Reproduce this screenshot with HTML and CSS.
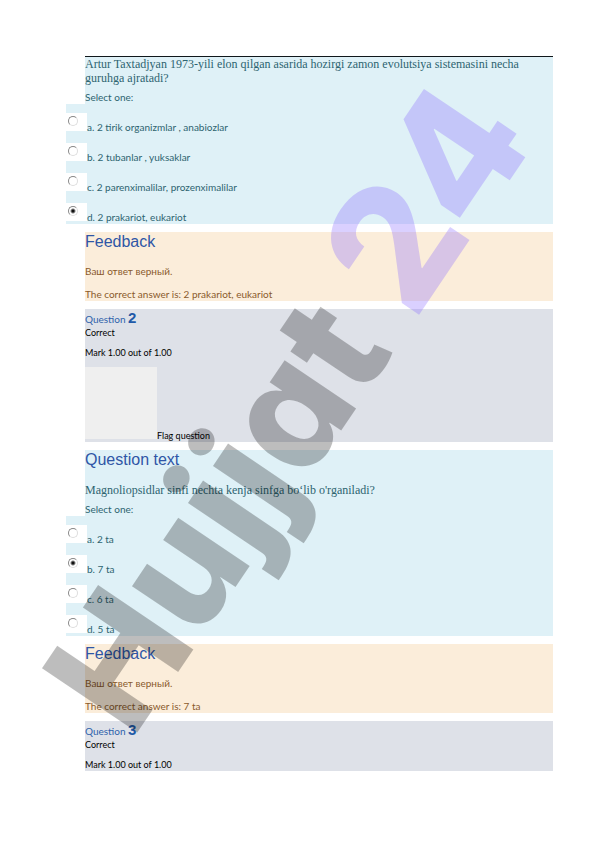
FILE: index.html
```html
<!DOCTYPE html>
<html lang="uz">
<head>
  <meta charset="utf-8">
  <meta name="viewport" content="width=device-width, initial-scale=1">
  <title>Quiz review</title>
  <link rel="stylesheet" href="styles.css">
</head>
<body>
<main class="review">

  <!-- question 1 -->
  <section class="question first">
    <p class="qtext">Artur Taxtadjyan 1973-yili elon qilgan asarida hozirgi zamon evolutsiya sistemasini necha guruhga ajratadi?</p>
    <p class="prompt">Select one:</p>
    <div class="answers">
      <div class="answer"><span class="pick"><input type="radio" name="q1" id="q1a"></span><label for="q1a">a. 2 tirik organizmlar , anabiozlar</label></div>
      <div class="answer"><span class="pick"><input type="radio" name="q1" id="q1b"></span><label for="q1b">b. 2 tubanlar , yuksaklar</label></div>
      <div class="answer"><span class="pick"><input type="radio" name="q1" id="q1c"></span><label for="q1c">c. 2 parenximalilar, prozenximalilar</label></div>
      <div class="answer"><span class="pick"><input type="radio" name="q1" id="q1d" checked></span><label for="q1d">d. 2 prakariot, eukariot</label></div>
    </div>
  </section>

  <section class="feedback">
    <h2>Feedback</h2>
    <p>Ваш ответ верный.</p>
    <p>The correct answer is: 2 prakariot, eukariot</p>
  </section>

  <!-- question 2 -->
  <section class="info">
    <h3>Question <b>2</b></h3>
    <p class="state">Correct</p>
    <p class="grade">Mark 1.00 out of 1.00</p>
    <div class="flag"><span class="flag-image"></span><span>Flag question</span></div>
  </section>

  <section class="question">
    <h2>Question text</h2>
    <p class="qtext">Magnoliopsidlar sinfi nechta kenja sinfga bo‘lib o'rganiladi?</p>
    <p class="prompt">Select one:</p>
    <div class="answers">
      <div class="answer"><span class="pick"><input type="radio" name="q2" id="q2a"></span><label for="q2a">a. 2 ta</label></div>
      <div class="answer"><span class="pick"><input type="radio" name="q2" id="q2b" checked></span><label for="q2b">b. 7 ta</label></div>
      <div class="answer"><span class="pick"><input type="radio" name="q2" id="q2c"></span><label for="q2c">c. 6 ta</label></div>
      <div class="answer"><span class="pick"><input type="radio" name="q2" id="q2d"></span><label for="q2d">d. 5 ta</label></div>
    </div>
  </section>

  <section class="feedback">
    <h2>Feedback</h2>
    <p>Ваш ответ верный.</p>
    <p>The correct answer is: 7 ta</p>
  </section>

  <!-- question 3 -->
  <section class="info">
    <h3>Question <b>3</b></h3>
    <p class="state">Correct</p>
    <p class="grade">Mark 1.00 out of 1.00</p>
  </section>

  <div class="watermark" aria-hidden="true">Hujjat <span>24</span></div>
</main>
</body>
</html>
```

FILE: styles.css
```css
body {
  margin: 0;
  background: #fff;
  font-family: Lato, "Liberation Sans", sans-serif;
  font-size: 10px;
  line-height: 14px;
  color: #000;
}

h2, h3, p {
  margin: 0;
  font-weight: normal;
}

.review {
  position: relative;
  display: flex;
  flex-direction: column;
  gap: 8px;
  padding: 56px 43px 71px 85px;
}

h2 {
  font-family: "Liberation Sans", Arial, sans-serif;
  font-size: 16px;
  line-height: 20px;
  color: #2f56a6;
}

/* question blocks */
.question {
  background: #dff1f7;
  color: #2d6470;
}

.first {
  border-top: 1px solid #10171b;
}

.qtext {
  font-family: "Liberation Serif", "Times New Roman", serif;
  font-size: 12px;
  line-height: 14px;
}

h2 + .qtext {
  margin-top: 13px;
}

.prompt {
  padding: 5px 0 0;
}

.answers {
  margin-left: -19px;
}

.answer {
  display: flex;
  align-items: flex-end;
  height: 30px;
  background: #dff1f7;
}

.pick {
  flex: none;
  width: 21px;
  height: 18px;
  margin-bottom: 3px;
  background: #fff;
}

.pick input {
  appearance: none;
  display: block;
  width: 10px;
  height: 10px;
  margin: 3px 0 0 2px;
  border: 1px solid #ddd;
  border-top-color: #888;
  border-left-color: #888;
  border-radius: 50%;
  background: #fff;
}

.pick input:checked {
  background: radial-gradient(circle, #111 1px, #fff 3px);
}

/* feedback */
.feedback {
  background: #fbedda;
  color: #8a5a2c;
}

.feedback p {
  padding-top: 9px;
}

.feedback h2 + p {
  padding-top: 12px;
}

/* grey info box */
.info {
  background: #dee1e8;
  font-size: 9px;
  line-height: 12px;
}

.info h3 {
  padding-top: 1px;
  font-size: 10px;
  line-height: 16px;
  color: #2f62ab;
}

.info b {
  font-family: "Liberation Sans", Arial, sans-serif;
  font-size: 15px;
  color: #1f5aa8;
}

.grade {
  padding: 8px 0 0;
}

.flag {
  display: flex;
  align-items: baseline;
  padding: 8px 0 0;
}

.flag-image {
  width: 72px;
  height: 72px;
  background: #efefef;
}

/* diagonal stamp over the page */
.watermark {
  position: absolute;
  left: 134px;
  top: 619px;
  font-family: Inter, sans-serif;
  font-size: 158px;
  line-height: 118px;
  font-weight: 800;
  font-feature-settings: "cv11";
  white-space: nowrap;
  color: rgba(0, 0, 0, 0.26);
  transform: rotate(-56deg);
  transform-origin: 0 100%;
  pointer-events: none;
}

.watermark span {
  font-size: 168px;
  color: rgba(140, 110, 255, 0.32);
}
```
